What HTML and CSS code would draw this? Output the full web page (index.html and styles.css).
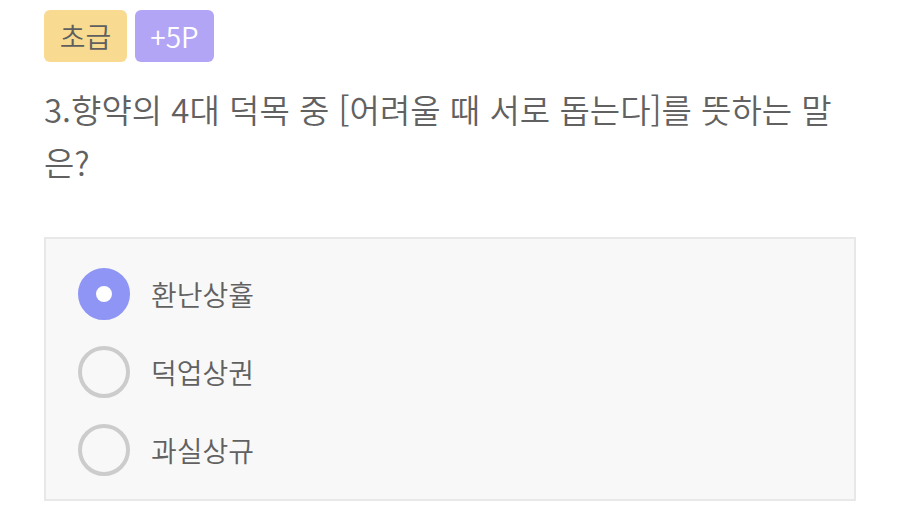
FILE: index.html
```html
<!DOCTYPE html>
<html lang="ko">
<head>
<meta charset="utf-8">
<link rel="stylesheet" href="styles.css">
</head>
<body>
<div class="page">
  <div class="badges">
    <span class="badge level">초급</span>
    <span class="badge point">+5P</span>
  </div>
  <p class="question">3.향약의 4대 덕목 중 [어려울 때 서로 돕는다]를 뜻하는 말은?</p>
  <div class="options">
    <div class="option selected"><span class="radio"></span><span class="label">환난상휼</span></div>
    <div class="option"><span class="radio"></span><span class="label">덕업상권</span></div>
    <div class="option"><span class="radio"></span><span class="label">과실상규</span></div>
  </div>
</div>
</body>
</html>
```
FILE: styles.css
```css
html, body { margin: 0; padding: 0; background: #fff; }
body { font-family: "Noto Sans CJK KR", "Noto Sans", sans-serif; color: #666; font-weight: 350; }
.page { padding: 10px 44px 0 44px; width: 812px; }
.badges { display: flex; gap: 8px; }
.badge {
  display: flex; align-items: center; justify-content: center;
  height: 52px; border-radius: 6px; font-size: 28px; box-sizing: border-box;
  line-height: 1;
}
.level { width: 83px; background: #f8da90; color: #5f5f5f; }
.point { width: 79px; background: #b3a5f6; color: #fff; }
.question {
  margin: 21px 0 0 0; font-size: 33px; line-height: 53px; color: #616161;
}
.options {
  margin-top: 48px; height: 264px; box-sizing: border-box;
  border: 2px solid #e8e8e8; background: #f8f8f8;
  padding: 29px 0 0 32px; display: flex; flex-direction: column; gap: 26px;
}
.option { display: flex; align-items: center; gap: 21px; height: 52px; }
.radio {
  width: 52px; height: 52px; box-sizing: border-box; border-radius: 50%;
  border: 4px solid #cccccc; background: transparent; flex: none;
}
.option.selected .radio { border: 18px solid #8e95f4; background: #fff; }
.label { font-size: 28px; color: #616161; line-height: 1; }
```
